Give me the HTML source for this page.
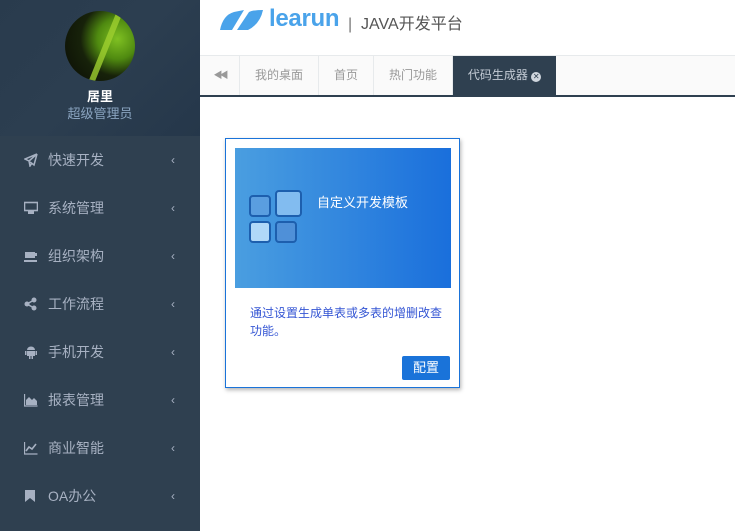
<!DOCTYPE html>
<html><head><meta charset="utf-8"><style>
*{margin:0;padding:0;box-sizing:border-box}
body{width:735px;height:531px;overflow:hidden;background:#fff;font-family:"Liberation Sans","Noto Sans CJK SC",sans-serif;position:relative}
.side{position:absolute;left:0;top:0;width:200px;height:531px;background:#2f4050}
.prof{position:absolute;left:0;top:0;width:200px;height:136px;background:linear-gradient(135deg,#293b4d 0%,#2c3e50 50%,#25374a 100%)}
.av{position:absolute;left:65px;top:11px;width:70px;height:70px;border-radius:50%;background:radial-gradient(circle at 75% 40%,#7fc022 0%,#4f8a10 30%,#17220a 55%,#0a0c05 100%);overflow:hidden}
.av:after{content:"";position:absolute;left:36px;top:-5px;width:6px;height:90px;background:#9fd030;transform:rotate(22deg);opacity:.8}
.nm{position:absolute;top:86px;width:200px;text-align:center;color:#fff;font-size:13px;font-weight:bold}
.rl{position:absolute;top:103px;width:200px;text-align:center;color:#8aa4c0;font-size:13px}
.mi{position:absolute;left:0;width:200px;height:48px;color:#a7b1c2;font-size:14px;line-height:48px}
.mi .ic{position:absolute;left:24px;top:17px;width:14px;height:14px}
.mi .t{position:absolute;left:48px}
.mi .ar{position:absolute;left:171px;font-size:12px}
.logo{position:absolute;left:220px;top:10px}
.hdr{position:absolute;left:269px;top:5px;font-size:24px;color:#4aa3ea;font-weight:bold;letter-spacing:-0.3px}
.sub{position:absolute;left:348px;top:10px;font-size:16px;color:#555}
.tabs{position:absolute;left:200px;top:55px;width:535px;height:42px;background:#fafafa;border-top:1px solid #e7eaec;border-bottom:2px solid #2f4050}
.tab{position:absolute;top:0;height:39px;line-height:39px;font-size:12px;color:#999;text-align:center;border-right:1px solid #e7eaec}
.card{position:absolute;left:225px;top:138px;width:235px;height:250px;border:1px solid #1a73d9;box-shadow:1px 2px 4px rgba(0,0,0,.3);background:#fff}
.ban{position:absolute;left:9px;top:9px;width:216px;height:140px;background:linear-gradient(90deg,#4a9ee0,#1a6fdc)}
.btn{position:absolute;left:176px;top:217px;width:48px;height:24px;background:#1a73d9;color:#fff;font-size:13px;line-height:24px;text-align:center;border-radius:2px}
</style></head><body>
<div class="side">
<div class="prof"><div class="av"></div><div class="nm">居里</div><div class="rl">超级管理员</div></div>
<div class="mi" style="top:136px"><svg class="ic" viewBox="0 0 14 14"><path d="M13 1L1 6l4 2 1 5 2-3 M13 1L5 8 M13 1l-3 11-4-3" fill="none" stroke="#a7b1c2" stroke-width="1.5"/></svg><span class="t">快速开发</span><span class="ar">‹</span></div>
<div class="mi" style="top:184px"><svg class="ic" viewBox="0 0 14 14"><rect x="0.5" y="1.5" width="13" height="8" fill="none" stroke="#a7b1c2" stroke-width="1.6"/><rect x="4" y="10" width="6" height="3" fill="#a7b1c2"/></svg><span class="t">系统管理</span><span class="ar">‹</span></div>
<div class="mi" style="top:232px"><svg class="ic" viewBox="0 0 14 14"><path d="M1 3h10v6H1z M11 4h2v3h-2" fill="#a7b1c2"/><rect x="0" y="11" width="13" height="2" fill="#a7b1c2"/></svg><span class="t">组织架构</span><span class="ar">‹</span></div>
<div class="mi" style="top:280px"><svg class="ic" viewBox="0 0 14 14"><circle cx="10" cy="3" r="2.5" fill="#a7b1c2"/><circle cx="3" cy="7" r="2.5" fill="#a7b1c2"/><circle cx="10" cy="11" r="2.5" fill="#a7b1c2"/><path d="M10 3L3 7l7 4" stroke="#a7b1c2" stroke-width="1.5" fill="none"/></svg><span class="t">工作流程</span><span class="ar">‹</span></div>
<div class="mi" style="top:328px"><svg class="ic" viewBox="0 0 14 14"><path d="M3 5a4 3.5 0 0 1 8 0z M3 6h8v5H3z M1 6h1.5v4H1z M11.5 6H13v4h-1.5z M5 11h1.5v3H5z M7.5 11H9v3H7.5z" fill="#a7b1c2"/></svg><span class="t">手机开发</span><span class="ar">‹</span></div>
<div class="mi" style="top:376px"><svg class="ic" viewBox="0 0 14 14"><path d="M0.5 1v12h13" stroke="#a7b1c2" stroke-width="1.3" fill="none"/><path d="M2 12V7l3-3 3 3 2-2 3 3v4z" fill="#a7b1c2"/></svg><span class="t">报表管理</span><span class="ar">‹</span></div>
<div class="mi" style="top:424px"><svg class="ic" viewBox="0 0 14 14"><path d="M0.5 1v12h13" stroke="#a7b1c2" stroke-width="1.3" fill="none"/><path d="M2 10l3-4 3 2 4-5" stroke="#a7b1c2" stroke-width="1.6" fill="none"/></svg><span class="t">商业智能</span><span class="ar">‹</span></div>
<div class="mi" style="top:472px"><svg class="ic" viewBox="0 0 14 14"><path d="M1 1h10v12L6 9 1 13z" fill="#a7b1c2"/></svg><span class="t">OA办公</span><span class="ar">‹</span></div>
</div>
<svg class="logo" width="44" height="20" viewBox="0 0 44 20"><path d="M0 20Q3 5 14 2L24 0 12 20z" fill="#4aa3ea"/><path d="M17 20L29 2Q33 0 43 0Q40 14 28 20z" fill="#4aa3ea"/></svg>
<div class="hdr">learun</div>
<div class="sub"><span style="color:#777">|</span>&nbsp; JAVA开发平台</div>
<div class="tabs">
<div class="tab" style="left:0;width:40px;color:#999;font-size:9px;letter-spacing:-3px">◀◀</div>
<div class="tab" style="left:40px;width:79px">我的桌面</div>
<div class="tab" style="left:119px;width:55px">首页</div>
<div class="tab" style="left:174px;width:79px">热门功能</div>
<div class="tab" style="left:253px;width:103px;background:#2f4050;color:#c4ccd6;border:none">代码生成器 <span style="display:inline-block;width:10px;height:10px;border-radius:50%;background:#d0d6de;color:#2f4050;font-size:8px;line-height:10px;vertical-align:0px">✕</span></div>
</div>
<div class="card">
<div class="ban">
<svg style="position:absolute;left:13px;top:42px" width="55" height="55" viewBox="0 0 55 55"><g stroke="#1d5fae" stroke-width="2"><rect x="2" y="6" width="20" height="20" rx="3" fill="#5a9ee0"/><rect x="28" y="1" width="25" height="25" rx="3" fill="#82bcf0"/><rect x="2" y="32" width="20" height="20" rx="3" fill="#b0d8f8"/><rect x="28" y="32" width="20" height="20" rx="3" fill="#4f90d8"/></g></svg>
<div style="position:absolute;left:82px;top:44px;color:#fff;font-size:13px">自定义开发模板</div>
</div>
<div style="position:absolute;left:24px;top:165px;width:200px;font-size:12px;line-height:18px;color:#3556d4">通过设置生成单表或多表的增删改查功能。</div>
<div class="btn">配置</div>
</div>
</body></html>
